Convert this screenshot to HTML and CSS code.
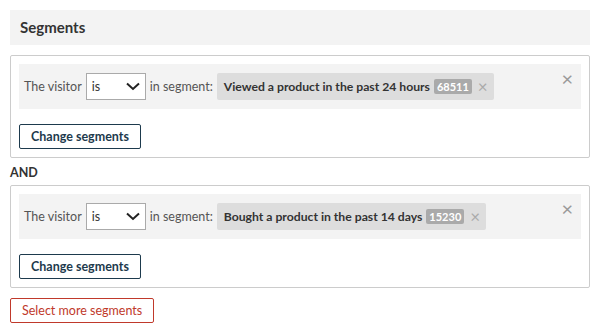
FILE: index.html
```html
<!DOCTYPE html>
<html lang="en">
<head>
    <meta charset="UTF-8">
    <meta name="viewport" content="width=device-width, initial-scale=1.0">
    <title>Segments</title>
    <link rel="stylesheet" href="styles.css">
</head>
<body>
    <div class="panel-title">Segments</div>

    <div class="segment-box">
        <div class="condition">
            <span class="label">The visitor</span>
            <span class="select">is
                <svg width="14" height="9" viewBox="0 0 14 9"><path d="M1 1.5 L7 7 L13 1.5" fill="none" stroke="#222" stroke-width="2"/></svg>
            </span>
            <span class="label">in segment:</span>
            <span class="chip">Viewed a product in the past 24 hours<span class="count">68511</span><span class="chip-x">&times;</span></span>
            <span class="remove">&times;</span>
        </div>
        <button class="btn-dark">Change segments</button>
    </div>

    <div class="and">AND</div>

    <div class="segment-box first">
        <div class="condition">
            <span class="label">The visitor</span>
            <span class="select">is
                <svg width="14" height="9" viewBox="0 0 14 9"><path d="M1 1.5 L7 7 L13 1.5" fill="none" stroke="#222" stroke-width="2"/></svg>
            </span>
            <span class="label">in segment:</span>
            <span class="chip">Bought a product in the past 14 days<span class="count">15230</span><span class="chip-x">&times;</span></span>
            <span class="remove">&times;</span>
        </div>
        <button class="btn-dark">Change segments</button>
    </div>

    <button class="btn-red">Select more segments</button>
</body>
</html>
```

FILE: styles.css
```css
body {
    margin: 0;
    padding: 10px;
    font-family: Lato, "Open Sans", sans-serif;
    font-size: 12.5px;
    color: #333;
    background-color: #fff;
}
.panel-title {
    background-color: #f3f3f3;
    height: 35px;
    line-height: 35px;
    padding: 0 10px;
    font-size: 15px;
    font-weight: bold;
    color: #333;
}
.segment-box {
    margin-top: 10px;
    border: 1px solid #ccc;
    border-radius: 2px;
    padding: 8px;
}
.segment-box.first {
    margin-top: 0;
}
.condition {
    position: relative;
    display: flex;
    align-items: center;
    gap: 4px;
    background-color: #f3f3f3;
    padding: 9px 5px;
}
.label {
    color: #555;
}
.select {
    display: flex;
    align-items: center;
    justify-content: space-between;
    box-sizing: border-box;
    width: 60px;
    height: 27px;
    padding: 0 5px;
    border: 1px solid #aaa;
    background-color: #fff;
    color: #333;
}
.chip {
    display: flex;
    align-items: center;
    height: 27px;
    padding: 0 6px 0 7px;
    background-color: #ddd;
    border-radius: 2px;
    font-size: 12.2px;
    font-weight: bold;
    color: #333;
}
.count {
    margin-left: 4px;
    background-color: #aaa;
    color: #fff;
    font-size: 11px;
    padding: 1px 3px;
    border-radius: 2px;
}
.chip-x {
    margin-left: 6px;
    color: #aaa;
    font-weight: normal;
    font-size: 17px;
    line-height: 1;
}
.remove {
    position: absolute;
    top: 2px;
    right: 8px;
    color: #999;
    font-size: 20px;
}
button {
    font-family: inherit;
    font-size: 12.5px;
    font-weight: bold;
    background-color: #fff;
    height: 25px;
    padding: 0 11px;
    border-radius: 2px;
    cursor: pointer;
}
.btn-dark {
    margin-top: 15px;
    border: 1px solid #1d3a4d;
    color: #1d3a4d;
}
.btn-red {
    margin-top: 10px;
    border: 1px solid #c0392b;
    color: #c0392b;
    font-weight: normal;
}
.and {
    font-weight: bold;
    line-height: 18px;
    margin: 6px 0 3px;
}
```
